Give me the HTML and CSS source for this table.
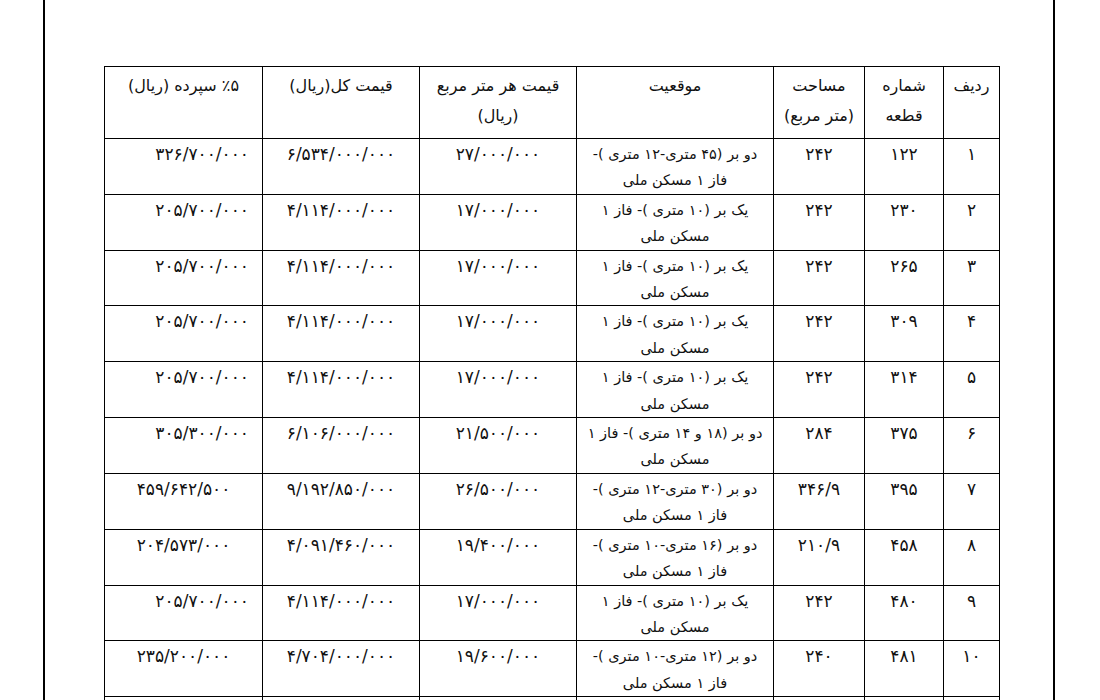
FILE: index.html
```html
<!DOCTYPE html>
<html lang="fa">
<head>
<meta charset="utf-8">
<title>جدول قطعات</title>
<link rel="stylesheet" href="styles.css">
</head>
<body>
<div class="page">
  <table class="lots" dir="rtl">
    <colgroup>
      <col class="c-row"><col class="c-lot"><col class="c-area"><col class="c-loc"><col class="c-unit"><col class="c-total"><col class="c-dep">
    </colgroup>
    <thead>
      <tr>
        <th>ردیف</th>
        <th>شماره<br>قطعه</th>
        <th>مساحت<br>(متر مربع)</th>
        <th>موقعیت</th>
        <th>قیمت هر متر مربع<br>(ریال)</th>
        <th>قیمت کل(ریال)</th>
        <th>٪۵ سپرده (ریال)</th>
      </tr>
    </thead>
    <tbody>
      <tr><td class="n">۱</td><td class="n">۱۲۲</td><td class="n">۲۴۲</td><td>دو بر (۴۵ متری-۱۲ متری )-<br>فاز ۱ مسکن ملی</td><td class="n">۲۷/۰۰۰/۰۰۰</td><td class="n">۶/۵۳۴/۰۰۰/۰۰۰</td><td class="n r">۳۲۶/۷۰۰/۰۰۰</td></tr>
      <tr><td class="n">۲</td><td class="n">۲۳۰</td><td class="n">۲۴۲</td><td>یک بر (۱۰ متری )- فاز ۱<br>مسکن ملی</td><td class="n">۱۷/۰۰۰/۰۰۰</td><td class="n">۴/۱۱۴/۰۰۰/۰۰۰</td><td class="n r">۲۰۵/۷۰۰/۰۰۰</td></tr>
      <tr><td class="n">۳</td><td class="n">۲۶۵</td><td class="n">۲۴۲</td><td>یک بر (۱۰ متری )- فاز ۱<br>مسکن ملی</td><td class="n">۱۷/۰۰۰/۰۰۰</td><td class="n">۴/۱۱۴/۰۰۰/۰۰۰</td><td class="n r">۲۰۵/۷۰۰/۰۰۰</td></tr>
      <tr><td class="n">۴</td><td class="n">۳۰۹</td><td class="n">۲۴۲</td><td>یک بر (۱۰ متری )- فاز ۱<br>مسکن ملی</td><td class="n">۱۷/۰۰۰/۰۰۰</td><td class="n">۴/۱۱۴/۰۰۰/۰۰۰</td><td class="n r">۲۰۵/۷۰۰/۰۰۰</td></tr>
      <tr><td class="n">۵</td><td class="n">۳۱۴</td><td class="n">۲۴۲</td><td>یک بر (۱۰ متری )- فاز ۱<br>مسکن ملی</td><td class="n">۱۷/۰۰۰/۰۰۰</td><td class="n">۴/۱۱۴/۰۰۰/۰۰۰</td><td class="n r">۲۰۵/۷۰۰/۰۰۰</td></tr>
      <tr><td class="n">۶</td><td class="n">۳۷۵</td><td class="n">۲۸۴</td><td>دو بر (۱۸ و ۱۴ متری )- فاز ۱<br>مسکن ملی</td><td class="n">۲۱/۵۰۰/۰۰۰</td><td class="n">۶/۱۰۶/۰۰۰/۰۰۰</td><td class="n r">۳۰۵/۳۰۰/۰۰۰</td></tr>
      <tr><td class="n">۷</td><td class="n">۳۹۵</td><td class="n">۳۴۶/۹</td><td>دو بر (۳۰ متری-۱۲ متری )-<br>فاز ۱ مسکن ملی</td><td class="n">۲۶/۵۰۰/۰۰۰</td><td class="n">۹/۱۹۲/۸۵۰/۰۰۰</td><td class="n">۴۵۹/۶۴۲/۵۰۰</td></tr>
      <tr><td class="n">۸</td><td class="n">۴۵۸</td><td class="n">۲۱۰/۹</td><td>دو بر (۱۶ متری-۱۰ متری )-<br>فاز ۱ مسکن ملی</td><td class="n">۱۹/۴۰۰/۰۰۰</td><td class="n">۴/۰۹۱/۴۶۰/۰۰۰</td><td class="n">۲۰۴/۵۷۳/۰۰۰</td></tr>
      <tr><td class="n">۹</td><td class="n">۴۸۰</td><td class="n">۲۴۲</td><td>یک بر (۱۰ متری )- فاز ۱<br>مسکن ملی</td><td class="n">۱۷/۰۰۰/۰۰۰</td><td class="n">۴/۱۱۴/۰۰۰/۰۰۰</td><td class="n r">۲۰۵/۷۰۰/۰۰۰</td></tr>
      <tr><td class="n">۱۰</td><td class="n">۴۸۱</td><td class="n">۲۴۰</td><td>دو بر (۱۲ متری-۱۰ متری )-<br>فاز ۱ مسکن ملی</td><td class="n">۱۹/۶۰۰/۰۰۰</td><td class="n">۴/۷۰۴/۰۰۰/۰۰۰</td><td class="n">۲۳۵/۲۰۰/۰۰۰</td></tr>
      <tr><td>&nbsp;</td><td></td><td></td><td></td><td></td><td></td><td></td></tr>
    </tbody>
  </table>
</div>
</body>
</html>
```

FILE: styles.css
```css
html, body {
  margin: 0;
  padding: 0;
  background: #fff;
  overflow: hidden;
  height: 100%;
}

body {
  font-family: "DejaVu Sans", sans-serif;
  color: #111;
}

.page {
  box-sizing: border-box;
  width: 1012px;
  height: 100vh;
  margin-left: 43px;
  border-left: 2px solid #000;
  border-right: 2px solid #000;
  padding: 66px 0 0 59px;
  overflow: hidden;
}

.lots {
  border-collapse: collapse;
  table-layout: fixed;
  width: 896px;
}

.c-row { width: 56px; }
.c-lot { width: 79px; }
.c-area { width: 91px; }
.c-loc { width: 197px; }
.c-unit { width: 157px; }
.c-total { width: 157px; }
.c-dep { width: 158px; }

.lots th,
.lots td {
  border: 1px solid #000;
  vertical-align: top;
  text-align: center;
  padding: 0 4px;
  font-weight: normal;
  box-sizing: border-box;
}

.lots th {
  height: 72px;
  font-size: 16px;
  line-height: 30px;
  padding-top: 4px;
}

.lots td {
  height: 55.8px;
  font-size: 14.5px;
  line-height: 26.4px;
  padding-top: 2px;
}

.lots td.n {
  font-size: 17px;
  letter-spacing: 1.2px;
}

.lots td.r {
  text-align: right;
  padding-right: 13px;
}
```
